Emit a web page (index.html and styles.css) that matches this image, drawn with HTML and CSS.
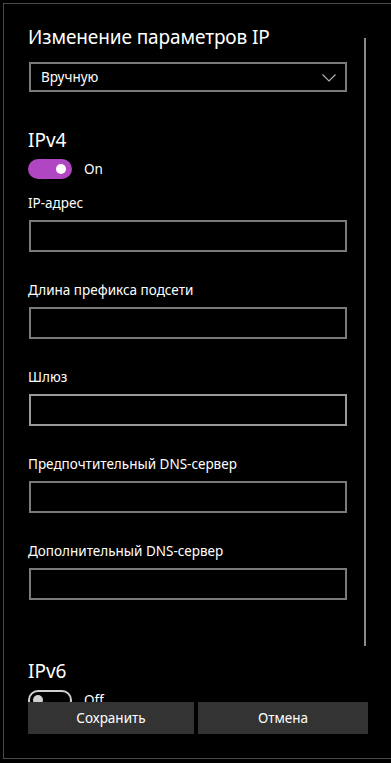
FILE: index.html
```html
<!DOCTYPE html>
<html lang="ru">
<head>
<meta charset="utf-8">
<link rel="stylesheet" href="styles.css">
</head>
<body>
<div class="window">
  <div class="scroll">
    <div class="content">
      <div class="title">Изменение параметров IP</div>
      <div class="select">
        <span>Вручную</span>
        <svg class="chev" width="14" height="8" viewBox="0 0 14 8"><path d="M0.5 0.5 L7 7 L13.5 0.5" fill="none" stroke="#b0b0b0" stroke-width="1.2"/></svg>
      </div>
      <div class="section">IPv4</div>
      <div class="toggle-row">
        <div class="toggle on"><div class="knob"></div></div>
        <span class="toggle-text">On</span>
      </div>
      <div class="field">
        <div class="label">IP-адрес</div>
        <div class="input"></div>
      </div>
      <div class="field">
        <div class="label">Длина префикса подсети</div>
        <div class="input"></div>
      </div>
      <div class="field">
        <div class="label">Шлюз</div>
        <div class="input hover"></div>
      </div>
      <div class="field">
        <div class="label">Предпочтительный DNS-сервер</div>
        <div class="input"></div>
      </div>
      <div class="field">
        <div class="label">Дополнительный DNS-сервер</div>
        <div class="input"></div>
      </div>
      <div class="section v6">IPv6</div>
      <div class="toggle-row">
        <div class="toggle off"><div class="knob"></div></div>
        <span class="toggle-text">Off</span>
      </div>
    </div>
    <div class="scrollbar"></div>
  </div>
  <div class="footer">
    <div class="btn save">Сохранить</div>
    <div class="btn cancel">Отмена</div>
  </div>
</div>
</body>
</html>
```
FILE: styles.css
```css
html, body {
  margin: 0;
  padding: 0;
  background: #000;
}
body {
  font-family: "Noto Sans", "Open Sans", sans-serif;
  color: #fff;
  width: 391px;
  height: 763px;
  overflow: hidden;
}
.window {
  margin: 3px 0 0 3px;
  height: 754px;
  border: 1px solid #4a4a4a;
  border-right: none;
  display: flex;
  flex-direction: column;
}
.scroll {
  flex: 1;
  display: flex;
  overflow: hidden;
  min-height: 0;
}
.content {
  width: 360px;
  padding-left: 25px;
  box-sizing: border-box;
  flex: none;
}
.title {
  font-size: 19px;
  line-height: 28px;
  margin-top: 19px;
  letter-spacing: -0.1px;
  margin-left: -1px;
}
.select {
  margin-top: 11px;
  width: 318px;
  height: 30px;
  box-sizing: border-box;
  border: 2px solid #7a7a7a;
  display: flex;
  align-items: center;
  justify-content: space-between;
  padding: 0 9px 0 10px;
  font-size: 13.5px;
}
.chev { display: block; margin-top: 1px; }
.section {
  font-size: 19px;
  line-height: 26px;
  margin-top: 35px;
  margin-left: -1px;
}
.section.v6 { margin-top: 58px; }
.toggle-row {
  display: flex;
  align-items: center;
  margin-top: 6px;
  height: 20px;
}
.toggle {
  width: 44px;
  height: 20px;
  border-radius: 10px;
  box-sizing: border-box;
  position: relative;
  flex: none;
}
.toggle.on {
  background: #b146c2;
  margin-left: -1px;
}
.toggle.off {
  border: 2px solid #d0d0d0;
  margin-left: -1px;
}
.knob {
  position: absolute;
  width: 10px;
  height: 10px;
  border-radius: 50%;
  top: 5px;
}
.toggle.on .knob { background: #fff; right: 6px; }
.toggle.off .knob { background: #d0d0d0; left: 3px; top: 3px; }
.toggle-text {
  font-size: 13.5px;
  margin-left: 12px;
}
.field { margin-top: 14px; }
.field + .field { margin-top: 28px; }
.label {
  font-size: 13.5px;
  line-height: 20px;
  margin-left: -1px;
}
.input {
  margin-top: 7px;
  width: 318px;
  height: 32px;
  box-sizing: border-box;
  border: 2px solid #7a7a7a;
}
.input.hover { border-color: #9a9a9a; }
.scrollbar {
  width: 2px;
  height: 608px;
  margin-top: 34px;
  background: #8a8a8a;
  flex: none;
}
.footer {
  height: 56px;
  flex: none;
  background: #000;
  display: flex;
  padding-left: 24px;
  gap: 4px;
}
.btn {
  height: 32px;
  background: #333;
  display: flex;
  align-items: center;
  justify-content: center;
  font-size: 13.5px;
  color: #fff;
}
.save { width: 166px; }
.cancel { width: 170px; }
```
